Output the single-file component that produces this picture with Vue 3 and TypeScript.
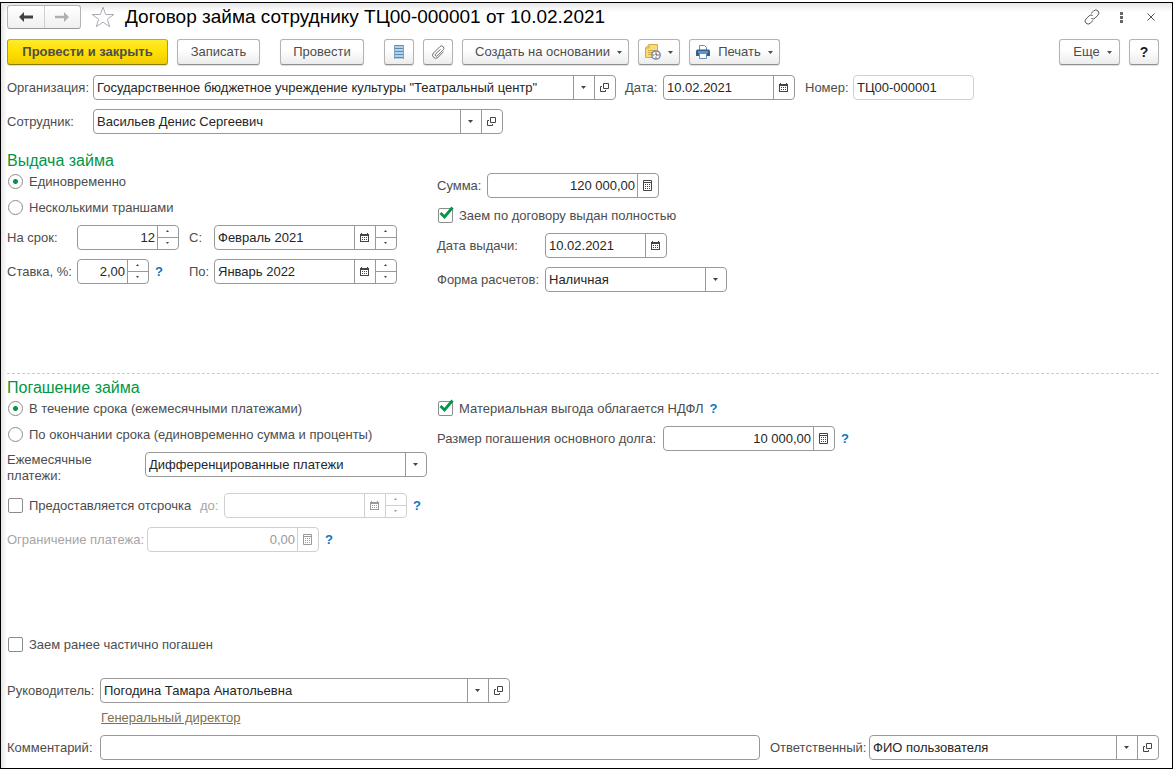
<script setup lang="ts">
import { ref } from 'vue'

const organization = ref('Государственное бюджетное учреждение культуры "Театральный центр"')
const docDate = ref('10.02.2021')
const docNumber = ref('ТЦ00-000001')
const employee = ref('Васильев Денис Сергеевич')

const issueMode = ref('once')
const issueModes = [
  { value: 'once', label: 'Единовременно' },
  { value: 'tranches', label: 'Несколькими траншами' },
]
const term = ref('12')
const rate = ref('2,00')
const periodFrom = ref('Февраль 2021')
const periodTo = ref('Январь 2022')
const amount = ref('120 000,00')
const fullyIssued = ref(true)
const issueDate = ref('10.02.2021')
const paymentForm = ref('Наличная')

const repayMode = ref('monthly')
const repayModes = [
  { value: 'monthly', label: 'В течение срока (ежемесячными платежами)' },
  { value: 'end', label: 'По окончании срока (единовременно сумма и проценты)' },
]
const paymentKind = ref('Дифференцированные платежи')
const deferred = ref(false)
const deferredTo = ref('')
const paymentLimit = ref('0,00')
const taxable = ref(true)
const principal = ref('10 000,00')
const partlyRepaid = ref(false)

const manager = ref('Погодина Тамара Анатольевна')
const comment = ref('')
const responsible = ref('ФИО пользователя')
</script>

<template>
  <div class="window">
    <svg class="sprite" aria-hidden="true">
      <symbol id="i-down" viewBox="0 0 5 3"><path d="M0 0h5L2.5 3z" fill="currentColor" /></symbol>
      <symbol id="i-up" viewBox="0 0 3 2"><path d="M0 2h3L1.5 0z" fill="currentColor" /></symbol>
      <symbol id="i-dn" viewBox="0 0 3 2"><path d="M0 0h3L1.5 2z" fill="currentColor" /></symbol>
      <symbol id="i-open" viewBox="0 0 9 9">
        <path d="M3.5.5h5v5h-5zM2 3.5H.5v5h5V7" fill="none" stroke="currentColor" />
      </symbol>
      <symbol id="i-cal" viewBox="0 0 9 9">
        <path d="M0 1h1V0h1v1h5V0h1v1h1v8H0z" fill="currentColor" />
        <path d="M1 3h7v5H1z" fill="#fff" />
        <path d="M2 4h1v1H2zM4 4h1v1H4zM6 4h1v1H6zM2 6h1v1H2zM4 6h1v1H4zM6 6h1v1H6z" fill="currentColor" />
      </symbol>
      <symbol id="i-calc" viewBox="0 0 9 11">
        <path d="M.5.5h8v10h-8zM0 2.5h9" fill="none" stroke="currentColor" />
        <path d="M2 4h1v1H2zM4 4h1v1H4zM6 4h1v1H6zM2 6h1v1H2zM4 6h1v1H4zM6 6h1v1H6zM2 8h1v1H2zM4 8h1v1H4zM6 8h1v1H6z" fill="currentColor" />
      </symbol>
      <symbol id="i-check" viewBox="0 0 18 16">
        <path d="M3.500 8 7.500 12 15.500 2.500" fill="none" stroke="#009646" stroke-width="2.800" />
      </symbol>
    </svg>

    <header class="head">
      <div class="nav">
        <button type="button" aria-label="Назад">
          <svg width="14" height="10" viewBox="0 0 14 10"><path d="M0 5 5 0v3.5h9v3H5V10z" fill="#404040" /></svg>
        </button>
        <button type="button" aria-label="Вперед">
          <svg width="14" height="10" viewBox="0 0 14 10"><path d="M14 5 9 0v3.8H0v2.4h9V10z" fill="#b0b0b0" /></svg>
        </button>
      </div>
      <button type="button" class="plain star" aria-label="В избранное">
        <svg width="24" height="22" viewBox="0 0 24 22">
          <path d="m12 1.2 2.7 7.3h8.1l-6.5 4.8 2.5 7.5L12 16.2l-6.8 4.6 2.5-7.5L1.200 8.500h8.100z" fill="#fff" stroke="#a9adb3" />
        </svg>
      </button>
      <h1>Договор займа сотруднику ТЦ00-000001 от 10.02.2021</h1>
      <div class="tools">
        <button type="button" class="plain" aria-label="Получить ссылку">
          <svg width="16" height="16" viewBox="0 0 16 16" fill="none" stroke="#555">
            <path d="M7 4.500 9.700 1.900a2.900 2.900 0 0 1 4.300 4.200L11 9.100a2.900 2.900 0 0 1-3.600.4M9 11.500l-2.700 2.600A2.900 2.900 0 0 1 2 9.900L5 6.900a2.900 2.900 0 0 1 3.600-.4" />
          </svg>
        </button>
        <button type="button" class="plain" aria-label="Меню">
          <svg width="3" height="11" viewBox="0 0 3 11" fill="#666"><path d="M0 0h3v3H0zM0 4h3v3H0zM0 8h3v3H0z" /></svg>
        </button>
        <button type="button" class="plain" aria-label="Закрыть">
          <svg width="8" height="8" viewBox="0 0 8 8" stroke="#555"><path d="m.5.5 7 7m0-7-7 7" /></svg>
        </button>
      </div>
    </header>

    <div class="toolbar">
      <button type="button" class="btn primary">Провести и закрыть</button>
      <button type="button" class="btn write">Записать</button>
      <button type="button" class="btn post">Провести</button>
      <div class="group">
        <button type="button" class="btn square" aria-label="Движения документа">
          <svg width="10" height="14" viewBox="0 0 10 14">
            <path d="M0 0h10v14H0z" fill="#b4d0e6" />
            <path d="M0 .5h10M0 3.500h10M0 6.500h10M0 9.500h10M0 12.500h10" stroke="#5a8db5" />
            <path d="M.5 0v14M9.500 0v14" stroke="#7ba5c6" />
          </svg>
        </button>
        <button type="button" class="btn square" aria-label="Присоединенные файлы">
          <svg width="14" height="14" viewBox="0 0 14 14" fill="none" stroke="#707070">
            <path d="M9.500 4.200 4.600 9.100a1.200 1.200 0 0 0 1.700 1.700l5.900-5.900a2.300 2.300 0 0 0-3.300-3.300L2.500 8a3.100 3.100 0 0 0 4.400 4.400l5.600-5.600" />
          </svg>
        </button>
        <button type="button" class="btn create">Создать на основании<svg class="arrow"><use href="#i-down" /></svg></button>
        <button type="button" class="btn report" aria-label="Отчеты">
          <svg width="16" height="16" viewBox="0 0 16 16">
            <path d="M4 .5h8.500v13H.5V4z" fill="#f6dc7d" stroke="#d3ab3f" />
            <path d="M4 .5V4H.5M3 6.500h7M3 8.500h4M3 10.500h3" fill="none" stroke="#d3ab3f" />
            <circle cx="11" cy="11" r="4.200" fill="#fff" stroke="#5585b5" stroke-width="1.300" />
            <path d="M11 7.500v2M11 12.500v2M7.500 11h2M12.500 11h2" stroke="#e03c3c" />
            <path d="M11 9.500V11h1.500" fill="none" stroke="#345" />
          </svg>
          <svg class="arrow"><use href="#i-down" /></svg>
        </button>
        <button type="button" class="btn print">
          <svg width="14" height="14" viewBox="0 0 14 14">
            <path d="M3.500 5V.5h5l2 2V5" fill="#fff" stroke="#6d8db0" />
            <path d="M1 4.500h12l1 1V11H0V5.500z" fill="#2f6395" />
            <path d="M2 7h10" stroke="#a9c6de" />
            <path d="M3.500 8.500h7v5h-7z" fill="#fff" stroke="#6d8db0" />
          </svg>
          <span>Печать</span>
          <svg class="arrow"><use href="#i-down" /></svg>
        </button>
      </div>
      <div class="right">
        <button type="button" class="btn more">Еще<svg class="arrow"><use href="#i-down" /></svg></button>
        <button type="button" class="btn square ask">?</button>
      </div>
    </div>

    <div class="row top">
      <label class="key" for="org">Организация:</label>
      <div class="field w-org">
        <input id="org" v-model="organization" type="text">
        <button type="button" aria-label="Выбрать организацию"><svg class="down"><use href="#i-down" /></svg></button>
        <button type="button" aria-label="Открыть организацию"><svg class="open"><use href="#i-open" /></svg></button>
      </div>
      <label class="date" for="date">Дата:</label>
      <div class="field w-date">
        <input id="date" v-model="docDate" type="text">
        <button type="button" aria-label="Календарь"><svg class="cal"><use href="#i-cal" /></svg></button>
      </div>
      <label class="number" for="number">Номер:</label>
      <div class="field soft w-number"><input id="number" v-model="docNumber" type="text"></div>
    </div>
    <div class="row">
      <label class="key" for="employee">Сотрудник:</label>
      <div class="field w-person">
        <input id="employee" v-model="employee" type="text">
        <button type="button" aria-label="Выбрать сотрудника"><svg class="down"><use href="#i-down" /></svg></button>
        <button type="button" aria-label="Открыть сотрудника"><svg class="open"><use href="#i-open" /></svg></button>
      </div>
    </div>

    <section class="issue">
      <h2>Выдача займа</h2>
      <div class="columns">
        <div class="col">
          <label v-for="m in issueModes" :key="m.value" class="choice">
            <input v-model="issueMode" type="radio" name="issue" :value="m.value">{{ m.label }}
          </label>
          <div class="period">
            <label for="term">На срок:</label>
            <div class="field w-term">
              <input id="term" v-model="term" class="num" type="text">
              <div class="spin">
                <button type="button" aria-label="Увеличить срок"><svg><use href="#i-up" /></svg></button>
                <button type="button" aria-label="Уменьшить срок"><svg><use href="#i-dn" /></svg></button>
              </div>
            </div>
            <label for="from">С:</label>
            <div class="field">
              <input id="from" v-model="periodFrom" type="text">
              <button type="button" aria-label="Календарь"><svg class="cal"><use href="#i-cal" /></svg></button>
              <div class="spin">
                <button type="button" aria-label="Следующий месяц"><svg><use href="#i-up" /></svg></button>
                <button type="button" aria-label="Предыдущий месяц"><svg><use href="#i-dn" /></svg></button>
              </div>
            </div>
            <label for="rate">Ставка, %:</label>
            <div class="row">
              <div class="field w-rate">
                <input id="rate" v-model="rate" class="num" type="text">
                <div class="spin">
                  <button type="button" aria-label="Увеличить ставку"><svg><use href="#i-up" /></svg></button>
                  <button type="button" aria-label="Уменьшить ставку"><svg><use href="#i-dn" /></svg></button>
                </div>
              </div>
              <button type="button" class="help">?</button>
            </div>
            <label for="to">По:</label>
            <div class="field">
              <input id="to" v-model="periodTo" type="text">
              <button type="button" aria-label="Календарь"><svg class="cal"><use href="#i-cal" /></svg></button>
              <div class="spin">
                <button type="button" aria-label="Следующий месяц"><svg><use href="#i-up" /></svg></button>
                <button type="button" aria-label="Предыдущий месяц"><svg><use href="#i-dn" /></svg></button>
              </div>
            </div>
          </div>
        </div>
        <div class="col">
          <div class="row">
            <label class="k-sum" for="amount">Сумма:</label>
            <div class="field w-sum">
              <input id="amount" v-model="amount" class="num" type="text">
              <button type="button" aria-label="Калькулятор"><svg class="calc"><use href="#i-calc" /></svg></button>
            </div>
          </div>
          <label class="choice">
            <span class="tick"><input v-model="fullyIssued" type="checkbox"><svg v-if="fullyIssued"><use href="#i-check" /></svg></span>Заем по договору выдан полностью
          </label>
          <div class="row">
            <label class="k-issue" for="issue-date">Дата выдачи:</label>
            <div class="field w-issue">
              <input id="issue-date" v-model="issueDate" type="text">
              <button type="button" aria-label="Календарь"><svg class="cal"><use href="#i-cal" /></svg></button>
            </div>
          </div>
          <div class="row">
            <label class="k-issue" for="form">Форма расчетов:</label>
            <div class="field w-form">
              <select id="form" v-model="paymentForm"><option>Наличная</option><option>Безналичная</option></select>
              <span class="cell"><svg class="down"><use href="#i-down" /></svg></span>
            </div>
          </div>
        </div>
      </div>
    </section>

    <section class="repay">
      <h2>Погашение займа</h2>
      <div class="columns">
        <div class="col">
          <label v-for="m in repayModes" :key="m.value" class="choice">
            <input v-model="repayMode" type="radio" name="repay" :value="m.value">{{ m.label }}
          </label>
          <div class="row start">
            <label class="k-kind" for="kind">Ежемесячные<br>платежи:</label>
            <div class="field w-kind">
              <select id="kind" v-model="paymentKind"><option>Дифференцированные платежи</option><option>Аннуитетные платежи</option></select>
              <span class="cell"><svg class="down"><use href="#i-down" /></svg></span>
            </div>
          </div>
          <div class="row">
            <label class="choice deferral">
              <span class="tick"><input v-model="deferred" type="checkbox"><svg v-if="deferred"><use href="#i-check" /></svg></span>Предоставляется отсрочка
            </label>
            <label class="off until" for="until">до:</label>
            <div class="field off w-until">
              <input id="until" v-model="deferredTo" type="text" disabled>
              <button type="button" disabled aria-label="Календарь"><svg class="cal"><use href="#i-cal" /></svg></button>
              <div class="spin">
                <button type="button" disabled aria-label="Следующий месяц"><svg><use href="#i-up" /></svg></button>
                <button type="button" disabled aria-label="Предыдущий месяц"><svg><use href="#i-dn" /></svg></button>
              </div>
            </div>
            <button type="button" class="help">?</button>
          </div>
          <div class="row">
            <label class="off k-limit" for="limit">Ограничение платежа:</label>
            <div class="field off w-sum">
              <input id="limit" v-model="paymentLimit" class="num" type="text" disabled>
              <button type="button" disabled aria-label="Калькулятор"><svg class="calc"><use href="#i-calc" /></svg></button>
            </div>
            <button type="button" class="help">?</button>
          </div>
        </div>
        <div class="col">
          <div class="row">
            <label class="choice">
              <span class="tick"><input v-model="taxable" type="checkbox"><svg v-if="taxable"><use href="#i-check" /></svg></span>Материальная выгода облагается НДФЛ
            </label>
            <button type="button" class="help">?</button>
          </div>
          <div class="row">
            <label class="k-principal" for="principal">Размер погашения основного долга:</label>
            <div class="field w-sum">
              <input id="principal" v-model="principal" class="num" type="text">
              <button type="button" aria-label="Калькулятор"><svg class="calc"><use href="#i-calc" /></svg></button>
            </div>
            <button type="button" class="help">?</button>
          </div>
        </div>
      </div>
      <label class="choice partly">
        <span class="tick"><input v-model="partlyRepaid" type="checkbox"><svg v-if="partlyRepaid"><use href="#i-check" /></svg></span>Заем ранее частично погашен
      </label>
    </section>

    <footer>
      <div class="row">
        <label class="k-foot" for="manager">Руководитель:</label>
        <div class="field w-person">
          <input id="manager" v-model="manager" type="text">
          <button type="button" aria-label="Выбрать руководителя"><svg class="down"><use href="#i-down" /></svg></button>
          <button type="button" aria-label="Открыть руководителя"><svg class="open"><use href="#i-open" /></svg></button>
        </div>
      </div>
      <a class="position" href="#">Генеральный директор</a>
      <div class="row">
        <label class="k-foot" for="comment">Комментарий:</label>
        <div class="field grow"><input id="comment" v-model="comment" type="text"></div>
        <label class="k-resp" for="responsible">Ответственный:</label>
        <div class="field w-resp">
          <input id="responsible" v-model="responsible" type="text">
          <button type="button" aria-label="Выбрать ответственного"><svg class="down"><use href="#i-down" /></svg></button>
          <button type="button" aria-label="Открыть ответственного"><svg class="open"><use href="#i-open" /></svg></button>
        </div>
      </div>
    </footer>
  </div>
</template>

<style>
body {
  margin: 0;
  background: #fff;
}
</style>

<style scoped>
.window {
  box-sizing: border-box;
  margin-top: 2px;
  min-height: calc(100vh - 2px);
  padding: 2px 13px 8px 6px;
  border: 1px solid #000;
  background:
    linear-gradient(to bottom, #e6e6e6, rgba(255, 255, 255, 0) 9px),
    linear-gradient(to right, #e6e6e6, #fff 6px);
  color: #4d4d4d;
  font: 13px/16px "Liberation Sans", Arial, sans-serif;
  white-space: nowrap;
}
.sprite {
  position: absolute;
  width: 0;
  height: 0;
}
* {
  box-sizing: border-box;
}
button,
input,
select {
  margin: 0;
  font: inherit;
  color: inherit;
}
svg {
  display: block;
  flex: none;
}

.head {
  display: flex;
  align-items: center;
  height: 24px;
}
.nav {
  display: flex;
  width: 74px;
  height: 24px;
  border: 1px solid #b3b3b3;
  border-bottom-color: #999;
  border-radius: 3px;
  background: linear-gradient(#fff, #f0f0f0);
}
.nav button {
  display: flex;
  flex: 1;
  align-items: center;
  justify-content: center;
  padding: 0;
  border: 0;
  background: none;
}
.nav button + button {
  border-left: 1px solid #d0d0d0;
}
.plain {
  padding: 0;
  border: 0;
  background: none;
}
.star {
  margin: 0 10px;
}
h1 {
  margin: 0;
  color: #000;
  font-size: 19px;
  font-weight: 400;
  line-height: 24px;
}
.tools {
  display: flex;
  align-items: center;
  margin-left: auto;
  padding-right: 4px;
}
.tools .plain {
  display: flex;
  justify-content: center;
  margin-left: 22px;
}
.tools .plain + .plain {
  margin-left: 20px;
}
.tools .plain:last-child {
  margin-left: 24px;
}

.toolbar {
  display: flex;
  gap: 9px;
  margin: 10px 0;
}
.group,
.right {
  display: flex;
  gap: 9px;
}
.group {
  margin-left: 11px;
}
.right {
  margin-left: auto;
}
.btn {
  display: flex;
  align-items: center;
  justify-content: center;
  height: 26px;
  padding: 0;
  border: 1px solid #b3b3b3;
  border-bottom-color: #8f8f8f;
  border-radius: 3px;
  background: linear-gradient(#fff 40%, #ececec);
  box-shadow: 0 1px 1px #ddd;
}
.primary {
  width: 161px;
  border-color: #c9ae00 #b39b00 #8f7c00;
  background: linear-gradient(#ffea2e, #ffe000 50%, #f0cc00);
  font-weight: 700;
}
.write {
  width: 83px;
}
.post {
  width: 84px;
  margin-left: 11px;
}
.square {
  width: 30px;
}
.create {
  width: 167px;
  padding-left: 6px;
}
.report {
  width: 42px;
}
.print {
  width: 91px;
}
.print span {
  margin-left: 8px;
}
.more {
  width: 61px;
  padding-left: 6px;
}
.ask {
  color: #1a1a1a;
  font-size: 14px;
  font-weight: 700;
}
.arrow {
  width: 5px;
  height: 3px;
  margin: 1px 0 0 7px;
}

.row {
  display: flex;
  align-items: center;
}
.row.start {
  align-items: flex-start;
}
.row.top {
  margin-bottom: 9px;
}
.key {
  width: 86px;
}
.date {
  width: 47px;
  padding-left: 9px;
}
.number {
  width: 58px;
  padding-left: 10px;
}
.k-sum {
  width: 50px;
}
.k-issue {
  width: 108px;
}
.k-kind {
  width: 138px;
}
.k-limit {
  width: 140px;
}
.k-principal {
  width: 226px;
}
.k-foot {
  width: 93px;
}
.k-resp {
  width: 109px;
  padding-left: 10px;
}
.until {
  width: 34px;
  padding-left: 10px;
}
label.off {
  color: #a6a6a6;
}

.field {
  display: flex;
  height: 25px;
  border: 1px solid #999;
  border-radius: 4px;
  background: #fff;
}
.field.soft {
  border-color: #d0d0d0;
}
.field input,
.field select {
  flex: 1;
  width: 0;
  min-width: 0;
  height: 23px;
  padding: 0 3px;
  border: 0;
  outline: 0;
  appearance: none;
  background: none;
  color: #262626;
}
.field .num {
  padding-right: 2px;
  text-align: right;
}
.field > button,
.cell,
.spin {
  display: flex;
  flex: none;
  align-items: center;
  justify-content: center;
  width: 21px;
  padding: 0;
  border: 0;
  border-left: 1px solid #999;
  background: none;
  color: #444;
}
.field > button,
.cell {
  padding-right: 1px;
}
.field select {
  margin-right: -21px;
  padding-right: 21px;
}
.cell {
  pointer-events: none;
}
.spin {
  flex-direction: column;
}
.spin button {
  display: flex;
  flex: none;
  align-items: center;
  justify-content: center;
  width: 100%;
  height: 11px;
  padding: 0 1px 1px 0;
  border: 0;
  background: none;
}
.spin button + button {
  height: 12px;
  border-top: 1px solid #999;
}
.spin svg {
  width: 3px;
  height: 2px;
}
.down {
  width: 5px;
  height: 3px;
}
.open,
.cal {
  width: 9px;
  height: 9px;
}
.calc {
  width: 9px;
  height: 11px;
}
.field.off,
.off .spin,
.off > button,
.off .spin button {
  border-color: #d0d0d0;
}
.off .spin,
.off > button,
.off input {
  color: #999;
}
.w-org {
  width: 523px;
}
.w-date {
  width: 132px;
}
.w-number {
  width: 121px;
}
.w-person {
  width: 410px;
}
.w-term {
  width: 102px;
}
.w-rate {
  width: 72px;
}
.w-sum {
  width: 172px;
}
.w-issue {
  width: 122px;
}
.w-form {
  width: 182px;
}
.w-kind {
  width: 282px;
}
.w-until {
  width: 183px;
}
.w-resp {
  width: 290px;
}
.grow {
  flex: 1;
}
.help {
  width: 20px;
  padding: 0;
  border: 0;
  background: none;
  color: #0a78c2;
  font-weight: 700;
}

h2 {
  margin: 0 0 2px;
  color: #009646;
  font-size: 16px;
  font-weight: 400;
  line-height: 20px;
}
.issue {
  margin-top: 17px;
  padding-bottom: 81px;
}
.repay {
  padding-top: 4px;
  border-top: 1px dashed #ccc;
}
.columns {
  display: grid;
  grid-template-columns: 430px 1fr;
}
.col {
  display: flex;
  flex-direction: column;
  align-items: flex-start;
  gap: 9px;
}
.period {
  display: grid;
  grid-template-columns: 70px 112px 25px 183px;
  row-gap: 9px;
  align-items: center;
}
.choice {
  display: flex;
  align-items: center;
  height: 17px;
}
.choice input {
  display: block;
  flex: none;
  width: 15px;
  height: 15px;
  margin: 0 6px 0 1px;
  border: 1px solid #8c8c8c;
  border-radius: 2px;
  appearance: none;
  background: #fff;
}
.choice input[type="radio"] {
  border-radius: 50%;
}
.choice input[type="radio"]:checked {
  background: radial-gradient(circle, #009646 2px, #fff 3px);
}
.deferral {
  width: 183px;
}
.tick {
  position: relative;
}
.tick svg {
  position: absolute;
  top: -3px;
  left: 0;
  width: 18px;
  height: 16px;
  pointer-events: none;
}
.partly {
  margin: 84px 0 25px;
}
.position {
  display: block;
  width: max-content;
  margin: 7px 0 9px 94px;
  color: #7d7050;
}
</style>
